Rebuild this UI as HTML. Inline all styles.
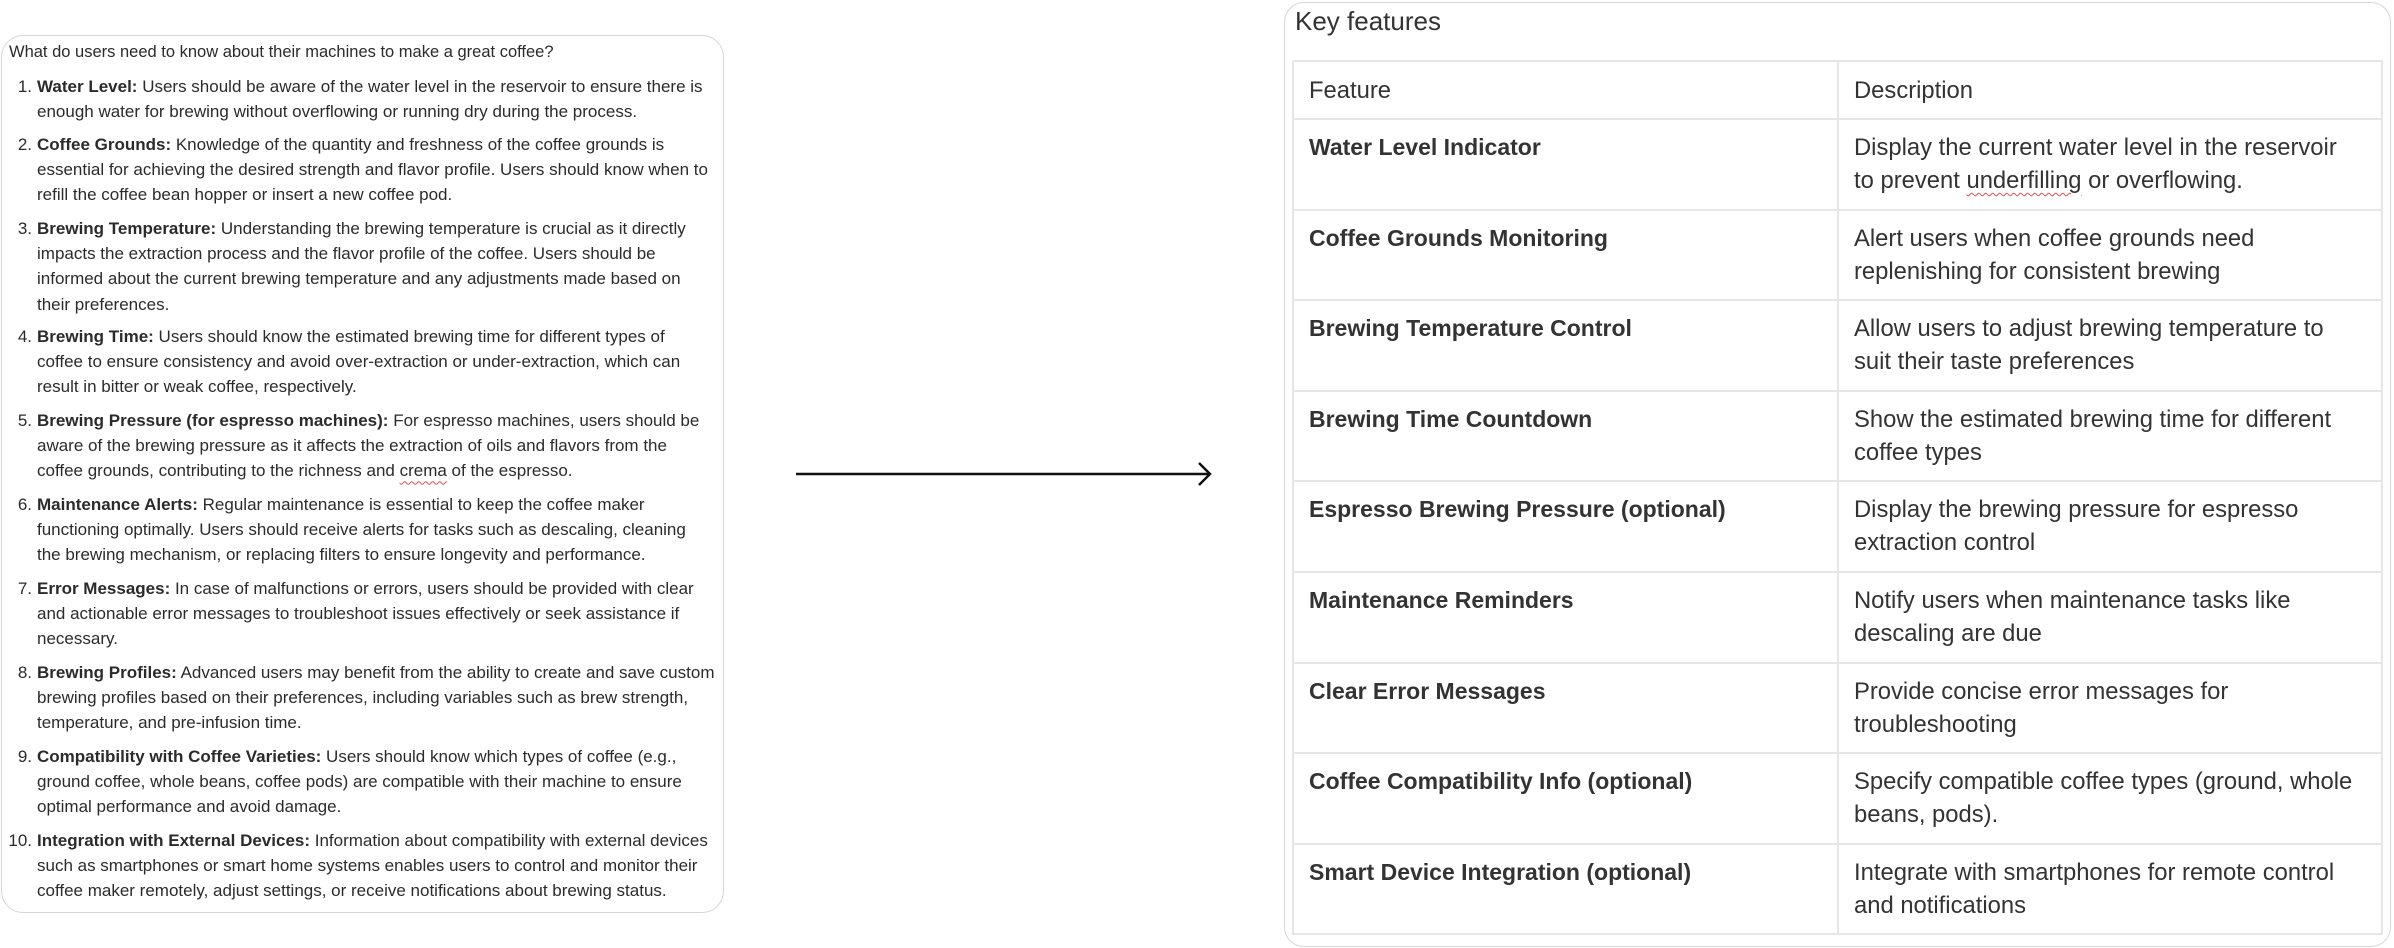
<!DOCTYPE html>
<html><head><meta charset="utf-8"><style>
*{margin:0;padding:0;box-sizing:border-box}
body{width:2394px;height:948px;background:#fff;font-family:"Liberation Sans",Arial,sans-serif;color:#2b2b2b;position:relative;overflow:hidden}
#left{position:absolute;left:1px;top:35px;width:723px;height:878px;border:1.5px solid #d6d6d6;border-radius:22px}
.q{position:absolute;left:7px;top:4px;font-size:16.5px;line-height:25px;white-space:nowrap}
.it{position:absolute;left:0;font-size:17px;line-height:25.2px;white-space:nowrap}
.it .n{position:absolute;left:0;width:30px;text-align:right}
.it .t{position:absolute;left:35px}
b{font-weight:bold}
#arrow{position:absolute;left:796px;top:462px}
#right{position:absolute;left:1284px;top:2px;width:1107px;height:945px;border:1.5px solid #d6d6d6;border-radius:20px}
.title{position:absolute;left:10px;top:1px;font-size:26px;line-height:34px;color:#333}
table{position:absolute;left:7px;top:57px;width:1091px;border-collapse:collapse;font-size:23.8px;color:#333}
td{border:2px solid #e6e6e6;vertical-align:top;padding:11px 15px 0 15px;line-height:33px;height:90.6px;white-space:nowrap}
tr.h td{height:58px;vertical-align:middle;padding-top:0}
td.f{width:545px;font-weight:bold;font-size:23px}
.sq{text-decoration:underline wavy #e05050;text-decoration-thickness:1px;text-underline-offset:4px}
</style></head><body>
<div id="left">
<div class="q">What do users need to know about their machines to make a great coffee?</div>
<div class="it" style="top:38px;left:0"><span class="n">1.</span><span class="t"><b>Water Level:</b> Users should be aware of the water level in the reservoir to ensure there is<br>enough water for brewing without overflowing or running dry during the process.</span></div>
<div class="it" style="top:96px"><span class="n">2.</span><span class="t"><b>Coffee Grounds:</b> Knowledge of the quantity and freshness of the coffee grounds is<br>essential for achieving the desired strength and flavor profile. Users should know when to<br>refill the coffee bean hopper or insert a new coffee pod.</span></div>
<div class="it" style="top:180px"><span class="n">3.</span><span class="t"><b>Brewing Temperature:</b> Understanding the brewing temperature is crucial as it directly<br>impacts the extraction process and the flavor profile of the coffee. Users should be<br>informed about the current brewing temperature and any adjustments made based on<br>their preferences.</span></div>
<div class="it" style="top:288px"><span class="n">4.</span><span class="t"><b>Brewing Time:</b> Users should know the estimated brewing time for different types of<br>coffee to ensure consistency and avoid over-extraction or under-extraction, which can<br>result in bitter or weak coffee, respectively.</span></div>
<div class="it" style="top:372px"><span class="n">5.</span><span class="t"><b>Brewing Pressure (for espresso machines):</b> For espresso machines, users should be<br>aware of the brewing pressure as it affects the extraction of oils and flavors from the<br>coffee grounds, contributing to the richness and <span class="sq">crema</span> of the espresso.</span></div>
<div class="it" style="top:456px"><span class="n">6.</span><span class="t"><b>Maintenance Alerts:</b> Regular maintenance is essential to keep the coffee maker<br>functioning optimally. Users should receive alerts for tasks such as descaling, cleaning<br>the brewing mechanism, or replacing filters to ensure longevity and performance.</span></div>
<div class="it" style="top:540px"><span class="n">7.</span><span class="t"><b>Error Messages:</b> In case of malfunctions or errors, users should be provided with clear<br>and actionable error messages to troubleshoot issues effectively or seek assistance if<br>necessary.</span></div>
<div class="it" style="top:624px"><span class="n">8.</span><span class="t"><b>Brewing Profiles:</b> Advanced users may benefit from the ability to create and save custom<br>brewing profiles based on their preferences, including variables such as brew strength,<br>temperature, and pre-infusion time.</span></div>
<div class="it" style="top:708px"><span class="n">9.</span><span class="t"><b>Compatibility with Coffee Varieties:</b> Users should know which types of coffee (e.g.,<br>ground coffee, whole beans, coffee pods) are compatible with their machine to ensure<br>optimal performance and avoid damage.</span></div>
<div class="it" style="top:792px"><span class="n">10.</span><span class="t"><b>Integration with External Devices:</b> Information about compatibility with external devices<br>such as smartphones or smart home systems enables users to control and monitor their<br>coffee maker remotely, adjust settings, or receive notifications about brewing status.</span></div>
</div>
<svg id="arrow" width="420" height="24" viewBox="0 0 420 24"><path d="M0 12H414M403 1L414 12L403 23" fill="none" stroke="#111" stroke-width="2.5"/></svg>
<div id="right">
<div class="title">Key features</div>
<table>
<tr class="h"><td class="f" style="font-weight:normal;font-size:23.8px">Feature</td><td>Description</td></tr>
<tr><td class="f">Water Level Indicator</td><td>Display the current water level in the reservoir<br>to prevent <span class="sq">underfilling</span> or overflowing.</td></tr>
<tr><td class="f">Coffee Grounds Monitoring</td><td>Alert users when coffee grounds need<br>replenishing for consistent brewing</td></tr>
<tr><td class="f">Brewing Temperature Control</td><td>Allow users to adjust brewing temperature to<br>suit their taste preferences</td></tr>
<tr><td class="f">Brewing Time Countdown</td><td>Show the estimated brewing time for different<br>coffee types</td></tr>
<tr><td class="f">Espresso Brewing Pressure (optional)</td><td>Display the brewing pressure for espresso<br>extraction control</td></tr>
<tr><td class="f">Maintenance Reminders</td><td>Notify users when maintenance tasks like<br>descaling are due</td></tr>
<tr><td class="f">Clear Error Messages</td><td>Provide concise error messages for<br>troubleshooting</td></tr>
<tr><td class="f">Coffee Compatibility Info (optional)</td><td>Specify compatible coffee types (ground, whole<br>beans, pods).</td></tr>
<tr><td class="f">Smart Device Integration (optional)</td><td>Integrate with smartphones for remote control<br>and notifications</td></tr>
</table>
</div>
</body></html>
